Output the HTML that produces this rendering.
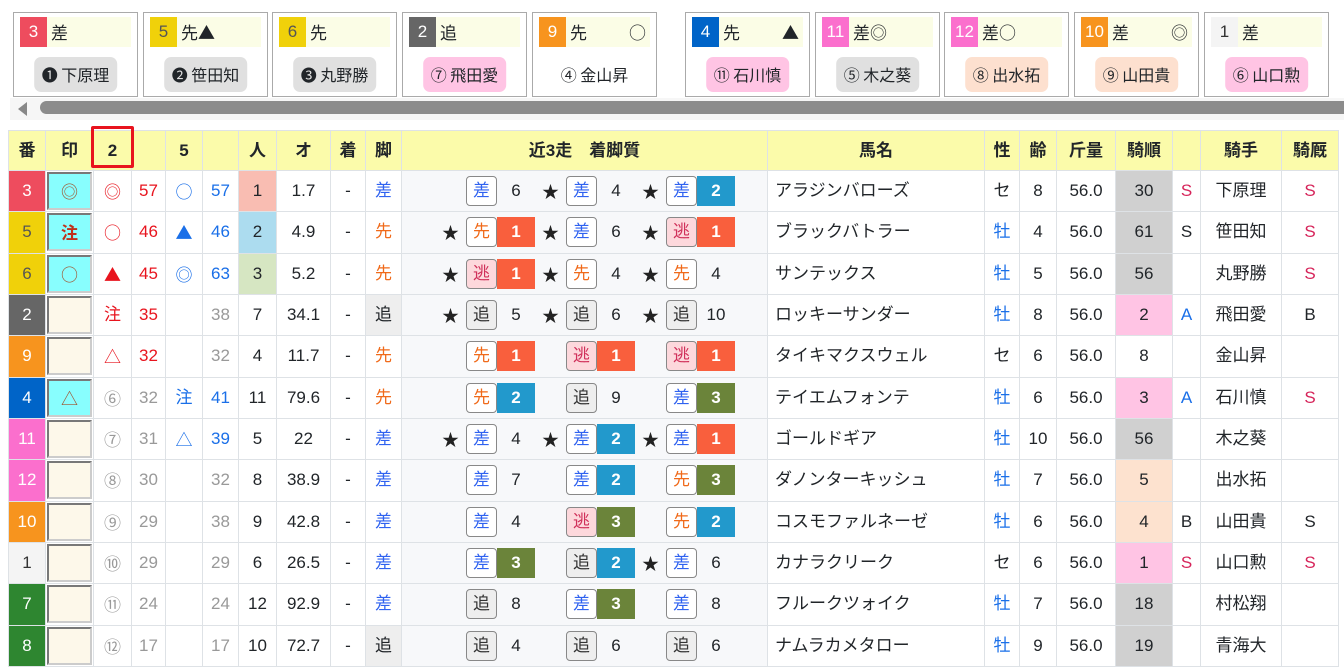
<!DOCTYPE html>
<html><head><meta charset="utf-8">
<style>
*{box-sizing:border-box;margin:0;padding:0}
body{width:1344px;height:670px;overflow:hidden;background:#fff;font-family:"Liberation Sans","Noto Sans CJK JP",sans-serif;color:#212529;position:relative}
.j{font-family:"Noto Sans CJK JP",sans-serif}
.card{position:absolute;top:12px;width:125px;height:85px;border:1px solid #aaa;background:#fff;font-family:"Noto Sans CJK JP",sans-serif}
.card .top{position:absolute;left:6px;top:4px;right:6px;height:30px;background:#fbfde6;font-size:17px;line-height:30px}
.card .n{display:inline-block;width:27px;height:30px;text-align:center;vertical-align:top;margin-right:4px;font-family:"Liberation Sans",sans-serif}
.card .mk{position:absolute;right:4px;top:0}
.card .pill{position:absolute;top:44px;left:50%;transform:translateX(-50%);height:35px;line-height:35px;padding:0 8px;border-radius:7px;font-size:16px;white-space:nowrap}
.pg{background:#e0e0e0}.pp{background:#ffc4e4}.po{background:#fde0cf}
.scroll{position:absolute;left:10px;top:98px;width:1334px;height:22px;background:#f6f6f6}
.arrow{position:absolute;left:8px;top:4px;width:0;height:0;border-top:7px solid transparent;border-bottom:7px solid transparent;border-right:9px solid #888}
.thumb{position:absolute;left:30px;top:3px;right:0;height:13px;background:#8c8c8c;border-radius:7px 0 0 7px}
table{position:absolute;left:8px;top:130px;border-collapse:collapse;table-layout:fixed;width:1330px;font-size:17px}
td,th{border:1px solid #dee2e6;text-align:center;overflow:hidden;white-space:nowrap;padding:0;line-height:20px}
th{background:#fbfbaa;height:40px;font-weight:bold;font-size:17px}
tr.r td{height:41.33px}
.c3{background:#ee4c5e;color:#fff}.c5,.c6{background:#f0d10a;color:#555}.c2{background:#666;color:#fff}.c9,.c10{background:#f7941e;color:#fff}.c4{background:#0064c8;color:#fff}.c11,.c12{background:#fb6fcd;color:#fff}.c1{background:#f4f4f4;color:#333}.c7,.c8{background:#2e8630;color:#fff}
td.in{padding:1px}
.inb{height:38px;border:2px solid #ccc;border-style:inset;background:#fdf8ea;line-height:34px;font-family:"Noto Sans CJK JP",sans-serif}
.cy{background:#88fefe;color:#a0522d}
.red{color:#e8141e}.blu{color:#1a6fe8}.gry{color:#999}.org{color:#f06a1a}.pink{color:#d6245a}
.race{position:relative;background:#f7f8fa}
.g{position:absolute;top:5px;height:30px;width:100px}
.st{position:absolute;left:0;top:5px;font-size:17px;line-height:20px;color:#222;font-family:"Noto Sans CJK JP",sans-serif}
.b{position:absolute;left:24px;top:0;width:31px;height:30px;border:1px solid #888;border-radius:4px;line-height:28px;text-align:center;background:#fff;font-size:17px}
.sa{color:#2f62f0}.sn{color:#f06a1a}.ni{background:#fdd8dc;color:#d0305a}.oi{background:#eee;color:#333}
.rs{position:absolute;left:55px;top:0;width:38px;height:30px;line-height:30px;text-align:center;font-size:17px}
.r1{background:#f95f3d;color:#fff;font-weight:bold}.r2{background:#2299cc;color:#fff;font-weight:bold}.r3{background:#6b843a;color:#fff;font-weight:bold}
.nm{text-align:left;padding-left:7px}
.gb{background:#d0d0d0}.pkb{background:#ffc4e4}.pcb{background:#fde2cf}
.hl{position:absolute;left:91px;top:126px;width:43px;height:42px;border:3px solid #e8141e;border-radius:2px}
</style></head><body>

<div class="card" style="left:13px"><div class="top"><span class="n c3">3</span>差</div><div class="pill pg">❶ 下原理</div></div>
<div class="card" style="left:143px"><div class="top"><span class="n c5">5</span>先▲</div><div class="pill pg">❷ 笹田知</div></div>
<div class="card" style="left:272px"><div class="top"><span class="n c6">6</span>先</div><div class="pill pg">❸ 丸野勝</div></div>
<div class="card" style="left:402px"><div class="top"><span class="n c2">2</span>追</div><div class="pill pp">⑦ 飛田愛</div></div>
<div class="card" style="left:532px"><div class="top"><span class="n c9">9</span>先<span class="mk">○</span></div><div class="pill">④ 金山昇</div></div>
<div class="card" style="left:685px"><div class="top"><span class="n c4">4</span>先<span class="mk">▲</span></div><div class="pill pp">⑪ 石川慎</div></div>
<div class="card" style="left:815px"><div class="top"><span class="n c11">11</span>差◎</div><div class="pill pg">⑤ 木之葵</div></div>
<div class="card" style="left:944px"><div class="top"><span class="n c12">12</span>差○</div><div class="pill po">⑧ 出水拓</div></div>
<div class="card" style="left:1074px"><div class="top"><span class="n c10">10</span>差<span class="mk">◎</span></div><div class="pill po">⑨ 山田貴</div></div>
<div class="card" style="left:1204px"><div class="top"><span class="n c1">1</span>差</div><div class="pill pp">⑥ 山口勲</div></div>

<div class="scroll"><div class="arrow"></div><div class="thumb"></div></div>

<table>
<colgroup><col style="width:37px"><col style="width:48px"><col style="width:38px"><col style="width:34px"><col style="width:37px"><col style="width:36px"><col style="width:38px"><col style="width:54px"><col style="width:35px"><col style="width:36px"><col style="width:366px"><col style="width:217px"><col style="width:35px"><col style="width:37px"><col style="width:59px"><col style="width:57px"><col style="width:28px"><col style="width:81px"><col style="width:57px"></colgroup>
<tr><th>番</th><th>印</th><th>2</th><th></th><th>5</th><th></th><th>人</th><th>オ</th><th>着</th><th>脚</th><th>近3走　着脚質</th><th>馬名</th><th>性</th><th>齢</th><th>斤量</th><th>騎順</th><th></th><th>騎手</th><th>騎厩</th></tr>

<tr class="r"><td class="c3">3</td><td class="in"><div class="inb cy">◎</div></td><td class="red j">◎</td><td class="red">57</td><td class="blu j">○</td><td class="blu">57</td><td style="background:#f9bdb2">1</td><td>1.7</td><td>-</td><td class="sa">差</td>
<td class="race"><div class="g" style="left:40px"><span class="b sa">差</span><span class="rs">6</span></div><div class="g" style="left:140px"><span class="st">★</span><span class="b sa">差</span><span class="rs">4</span></div><div class="g" style="left:240px"><span class="st">★</span><span class="b sa">差</span><span class="rs r2">2</span></div></td>
<td class="nm">アラジンバローズ</td><td>セ</td><td>8</td><td>56.0</td><td class="gb">30</td><td class="pink">S</td><td>下原理</td><td class="pink">S</td></tr>

<tr class="r"><td class="c5">5</td><td class="in"><div class="inb cy" style="color:#c0301a;font-weight:bold">注</div></td><td class="red j">○</td><td class="red">46</td><td class="blu j">▲</td><td class="blu">46</td><td style="background:#acdcef">2</td><td>4.9</td><td>-</td><td class="sn">先</td>
<td class="race"><div class="g" style="left:40px"><span class="st">★</span><span class="b sn">先</span><span class="rs r1">1</span></div><div class="g" style="left:140px"><span class="st">★</span><span class="b sa">差</span><span class="rs">6</span></div><div class="g" style="left:240px"><span class="st">★</span><span class="b ni">逃</span><span class="rs r1">1</span></div></td>
<td class="nm">ブラックバトラー</td><td class="blu">牡</td><td>4</td><td>56.0</td><td class="gb">61</td><td>S</td><td>笹田知</td><td class="pink">S</td></tr>

<tr class="r"><td class="c6">6</td><td class="in"><div class="inb cy">○</div></td><td class="red j">▲</td><td class="red">45</td><td class="blu j">◎</td><td class="blu">63</td><td style="background:#d6e6c2">3</td><td>5.2</td><td>-</td><td class="sn">先</td>
<td class="race"><div class="g" style="left:40px"><span class="st">★</span><span class="b ni">逃</span><span class="rs r1">1</span></div><div class="g" style="left:140px"><span class="st">★</span><span class="b sn">先</span><span class="rs">4</span></div><div class="g" style="left:240px"><span class="st">★</span><span class="b sn">先</span><span class="rs">4</span></div></td>
<td class="nm">サンテックス</td><td class="blu">牡</td><td>5</td><td>56.0</td><td class="gb">56</td><td></td><td>丸野勝</td><td class="pink">S</td></tr>

<tr class="r"><td class="c2">2</td><td class="in"><div class="inb"></div></td><td class="red">注</td><td class="red">35</td><td></td><td class="gry">38</td><td>7</td><td>34.1</td><td>-</td><td style="background:#eee">追</td>
<td class="race"><div class="g" style="left:40px"><span class="st">★</span><span class="b oi">追</span><span class="rs">5</span></div><div class="g" style="left:140px"><span class="st">★</span><span class="b oi">追</span><span class="rs">6</span></div><div class="g" style="left:240px"><span class="st">★</span><span class="b oi">追</span><span class="rs">10</span></div></td>
<td class="nm">ロッキーサンダー</td><td class="blu">牡</td><td>8</td><td>56.0</td><td class="pkb">2</td><td class="blu">A</td><td>飛田愛</td><td>B</td></tr>

<tr class="r"><td class="c9">9</td><td class="in"><div class="inb"></div></td><td class="red j">△</td><td class="red">32</td><td></td><td class="gry">32</td><td>4</td><td>11.7</td><td>-</td><td class="sn">先</td>
<td class="race"><div class="g" style="left:40px"><span class="b sn">先</span><span class="rs r1">1</span></div><div class="g" style="left:140px"><span class="b ni">逃</span><span class="rs r1">1</span></div><div class="g" style="left:240px"><span class="b ni">逃</span><span class="rs r1">1</span></div></td>
<td class="nm">タイキマクスウェル</td><td>セ</td><td>6</td><td>56.0</td><td>8</td><td></td><td>金山昇</td><td></td></tr>

<tr class="r"><td class="c4">4</td><td class="in"><div class="inb cy">△</div></td><td class="gry j">⑥</td><td class="gry">32</td><td class="blu">注</td><td class="blu">41</td><td>11</td><td>79.6</td><td>-</td><td class="sn">先</td>
<td class="race"><div class="g" style="left:40px"><span class="b sn">先</span><span class="rs r2">2</span></div><div class="g" style="left:140px"><span class="b oi">追</span><span class="rs">9</span></div><div class="g" style="left:240px"><span class="b sa">差</span><span class="rs r3">3</span></div></td>
<td class="nm">テイエムフォンテ</td><td class="blu">牡</td><td>6</td><td>56.0</td><td class="pkb">3</td><td class="blu">A</td><td>石川慎</td><td class="pink">S</td></tr>

<tr class="r"><td class="c11">11</td><td class="in"><div class="inb"></div></td><td class="gry j">⑦</td><td class="gry">31</td><td class="blu j">△</td><td class="blu">39</td><td>5</td><td>22</td><td>-</td><td class="sa">差</td>
<td class="race"><div class="g" style="left:40px"><span class="st">★</span><span class="b sa">差</span><span class="rs">4</span></div><div class="g" style="left:140px"><span class="st">★</span><span class="b sa">差</span><span class="rs r2">2</span></div><div class="g" style="left:240px"><span class="st">★</span><span class="b sa">差</span><span class="rs r1">1</span></div></td>
<td class="nm">ゴールドギア</td><td class="blu">牡</td><td>10</td><td>56.0</td><td class="gb">56</td><td></td><td>木之葵</td><td></td></tr>

<tr class="r"><td class="c12">12</td><td class="in"><div class="inb"></div></td><td class="gry j">⑧</td><td class="gry">30</td><td></td><td class="gry">32</td><td>8</td><td>38.9</td><td>-</td><td class="sa">差</td>
<td class="race"><div class="g" style="left:40px"><span class="b sa">差</span><span class="rs">7</span></div><div class="g" style="left:140px"><span class="b sa">差</span><span class="rs r2">2</span></div><div class="g" style="left:240px"><span class="b sn">先</span><span class="rs r3">3</span></div></td>
<td class="nm">ダノンターキッシュ</td><td class="blu">牡</td><td>7</td><td>56.0</td><td class="pcb">5</td><td></td><td>出水拓</td><td></td></tr>

<tr class="r"><td class="c10">10</td><td class="in"><div class="inb"></div></td><td class="gry j">⑨</td><td class="gry">29</td><td></td><td class="gry">38</td><td>9</td><td>42.8</td><td>-</td><td class="sa">差</td>
<td class="race"><div class="g" style="left:40px"><span class="b sa">差</span><span class="rs">4</span></div><div class="g" style="left:140px"><span class="b ni">逃</span><span class="rs r3">3</span></div><div class="g" style="left:240px"><span class="b sn">先</span><span class="rs r2">2</span></div></td>
<td class="nm">コスモファルネーゼ</td><td class="blu">牡</td><td>6</td><td>56.0</td><td class="pcb">4</td><td>B</td><td>山田貴</td><td>S</td></tr>

<tr class="r"><td class="c1">1</td><td class="in"><div class="inb"></div></td><td class="gry j">⑩</td><td class="gry">29</td><td></td><td class="gry">29</td><td>6</td><td>26.5</td><td>-</td><td class="sa">差</td>
<td class="race"><div class="g" style="left:40px"><span class="b sa">差</span><span class="rs r3">3</span></div><div class="g" style="left:140px"><span class="b oi">追</span><span class="rs r2">2</span></div><div class="g" style="left:240px"><span class="st">★</span><span class="b sa">差</span><span class="rs">6</span></div></td>
<td class="nm">カナラクリーク</td><td>セ</td><td>6</td><td>56.0</td><td class="pkb">1</td><td class="pink">S</td><td>山口勲</td><td class="pink">S</td></tr>

<tr class="r"><td class="c7">7</td><td class="in"><div class="inb"></div></td><td class="gry j">⑪</td><td class="gry">24</td><td></td><td class="gry">24</td><td>12</td><td>92.9</td><td>-</td><td class="sa">差</td>
<td class="race"><div class="g" style="left:40px"><span class="b oi">追</span><span class="rs">8</span></div><div class="g" style="left:140px"><span class="b sa">差</span><span class="rs r3">3</span></div><div class="g" style="left:240px"><span class="b sa">差</span><span class="rs">8</span></div></td>
<td class="nm">フルークツォイク</td><td class="blu">牡</td><td>7</td><td>56.0</td><td class="gb">18</td><td></td><td>村松翔</td><td></td></tr>

<tr class="r"><td class="c8">8</td><td class="in"><div class="inb"></div></td><td class="gry j">⑫</td><td class="gry">17</td><td></td><td class="gry">17</td><td>10</td><td>72.7</td><td>-</td><td style="background:#eee">追</td>
<td class="race"><div class="g" style="left:40px"><span class="b oi">追</span><span class="rs">4</span></div><div class="g" style="left:140px"><span class="b oi">追</span><span class="rs">6</span></div><div class="g" style="left:240px"><span class="b oi">追</span><span class="rs">6</span></div></td>
<td class="nm">ナムラカメタロー</td><td class="blu">牡</td><td>9</td><td>56.0</td><td class="gb">19</td><td></td><td>青海大</td><td></td></tr>
</table>
<div class="hl"></div>
</body></html>
